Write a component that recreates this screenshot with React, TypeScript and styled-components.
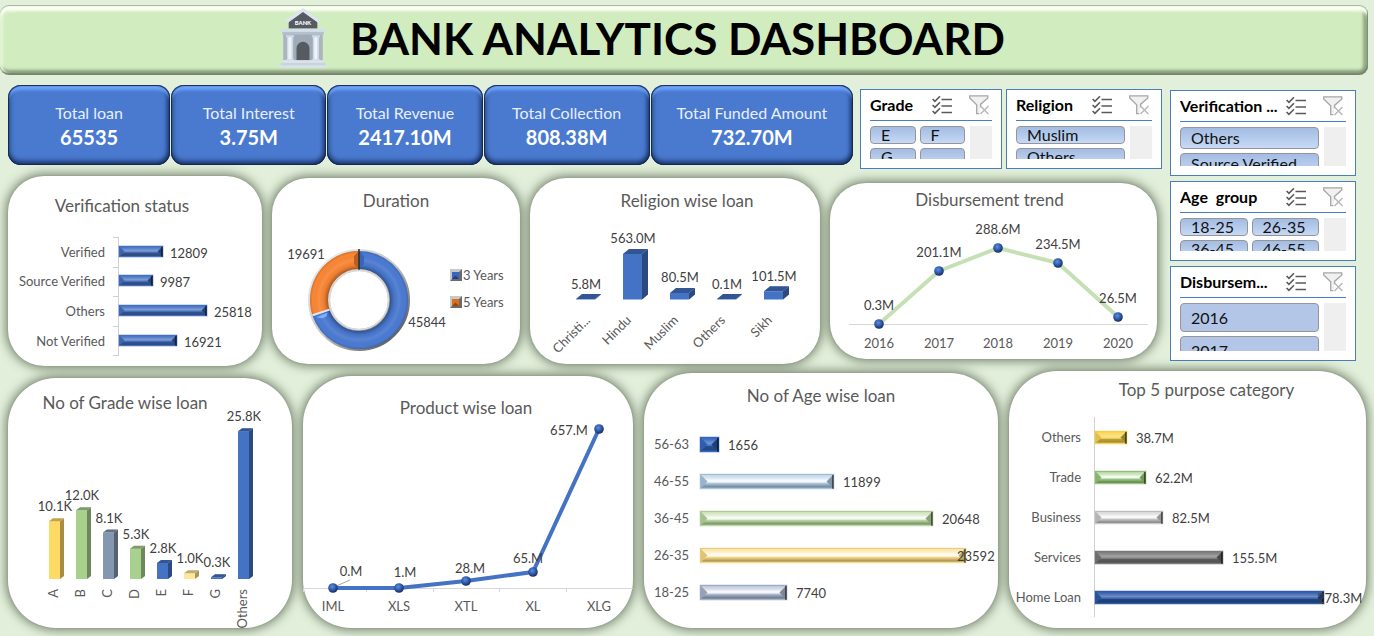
import React from "react";
import styled, { createGlobalStyle } from "styled-components";

const GlobalStyle = createGlobalStyle`
  * { box-sizing: border-box; }
  body {
    margin: 0;
    background: #e2efda;
    color: #595959;
    font-family: Lato, "Liberation Sans", sans-serif;
  }
  h1, h2, h3, p, dl, dd { margin: 0; }
`;

/* ---------- page frame ---------- */

const Page = styled.main`
  padding: 5px 0 8px;
  overflow: hidden;
`;

const Banner = styled.header`
  display: flex;
  align-items: center;
  justify-content: center;
  gap: 23px;
  height: 70px;
  margin-right: 6px;
  padding: 0 84px 4px 0;
  border-radius: 9px;
  background: #d1ecbf;
  box-shadow:
    inset 0 1px 1px #9fb592,
    inset -1px -2px 1px #76886c,
    inset 0 7px 3px -1px #fbfff4,
    inset 3px 0 3px #e6f8d9,
    inset -5px 0 3px #93a786,
    inset 0 -5px 3px #8b9f7f;
`;

const BannerTitle = styled.h1`
  color: #000;
  font-size: 44px;
  font-weight: 700;
  line-height: 60px;
  white-space: nowrap;
`;

const TopArea = styled.div`
  display: grid;
  grid-template-columns: minmax(0, 1fr) 186px;
  gap: 8px;
  padding: 10px 18px 0 8px;
`;

const MainColumn = styled.div`
  display: flex;
  flex-direction: column;
  gap: 7px;
`;

const SideColumn = styled.aside`
  display: flex;
  flex-direction: column;
  gap: 5px;
  padding-top: 5px;
`;

const SummaryRow = styled.div`
  display: grid;
  grid-template-columns: 848fr 142fr 156fr;
  column-gap: 4px;
  height: 84px;
`;

const KpiList = styled.dl`
  display: grid;
  grid-template-columns: 162fr 155fr 155fr 166fr 202fr;
  gap: 1px;
  height: 80px;
  padding-right: 3px;
`;

const Kpi = styled.div`
  display: flex;
  flex-direction: column;
  align-items: center;
  justify-content: center;
  padding-bottom: 1px;
  border-radius: 13px;
  background: #4a7ad0;
  color: #fff;
  text-align: center;
  white-space: nowrap;
  box-shadow:
    inset 0 0 1px 1px #14264a,
    inset 0 6px 3px -1px #6fa3fb,
    inset -4px 0 4px -1px #1f3a70,
    inset 0 -5px 5px -1px #1f3a70,
    inset 3px 0 4px #35609f;
`;

const KpiLabel = styled.dt`
  color: #e9effa;
  font-size: 16px;
  line-height: 24px;
`;

const KpiValue = styled.dd`
  font-size: 20px;
  font-weight: 700;
  line-height: 24px;
`;

/* ---------- slicers ---------- */

const SlicerBox = styled.section<{ $height: number }>`
  display: flex;
  flex-direction: column;
  align-self: end;
  width: 100%;
  height: ${(p) => p.$height}px;
  padding: 0 9px 9px;
  border: 1px solid #4a7ebb;
  background: #fff;
  color: #000;
`;

const SlicerHead = styled.div`
  display: flex;
  align-items: center;
  flex: none;
  gap: 17px;
  height: 31px;
  padding-right: 3px;
  border-bottom: 1px solid #4a7ebb;
`;

const SlicerName = styled.h3`
  flex: 1;
  min-width: 0;
  font-size: 16px;
  font-weight: 700;
  line-height: 20px;
  white-space: pre;
`;

const IconButton = styled.button`
  display: block;
  flex: none;
  width: 20px;
  height: 20px;
  padding: 0;
  border: 0;
  background: none;
  & svg { display: block; }
`;

const SlicerBody = styled.div`
  display: flex;
  flex: 1;
  gap: 5px;
  min-height: 0;
  margin-top: 5px;
  overflow: hidden;
`;

const SlicerGrid = styled.div<{ $columns: number; $row: number }>`
  display: grid;
  flex: 1;
  grid-template-columns: repeat(${(p) => p.$columns}, minmax(0, 1fr));
  grid-auto-rows: ${(p) => p.$row}px;
  gap: 4px;
`;

const SlicerItem = styled.button<{ $flat?: boolean }>`
  padding: 0 0 0 10px;
  border: 1px solid #969696;
  border-radius: 4px;
  background: ${(p) => (p.$flat ? "#b4c6e7" : "linear-gradient(#a3bce2, #c6d9f5)")};
  color: #111;
  font-family: inherit;
  font-size: 16px;
  line-height: 16px;
  text-align: left;
  white-space: nowrap;
`;

const ScrollTrack = styled.div`
  flex: none;
  width: 22px;
  background: #efefef;
`;

const MultiSelectIcon = () => (
  <svg width="20" height="20" viewBox="0 0 20 20" fill="none" stroke="#5a5a5a" strokeWidth="1.6">
    <path d="M.6 4l2.3 2.3L8 1.2M.6 10l2.3 2.3L8 7.2M.6 16l2.3 2.3L8 13.2" />
    <path d="M9.5 4.5H20M9.5 11H20M9.5 17.5H20" />
  </svg>
);

const ClearFilterIcon = () => (
  <svg width="20" height="20" viewBox="0 0 20 20" fill="none" stroke="#a6a6a6" strokeWidth="1.3">
    <path d="M11.5 12.2V9.4L18.8 3V.8H.7V3l7 6.8v8.9h2.6" fill="#f1f1f1" />
    <path d="M11.5 11l8 8M19.5 11l-8 8" stroke="#b9b9b9" strokeWidth="1.5" />
  </svg>
);

type SlicerProps = {
  name: string;
  label?: string;
  height: number;
  row: number;
  columns?: number;
  flat?: boolean;
  items: string[];
};

const Slicer = ({ name, label, height, row, columns = 1, flat, items }: SlicerProps) => (
  <SlicerBox $height={height} aria-label={label || name}>
    <SlicerHead>
      <SlicerName>{name}</SlicerName>
      <IconButton type="button" aria-label="Multi-select"><MultiSelectIcon /></IconButton>
      <IconButton type="button" aria-label="Clear filter"><ClearFilterIcon /></IconButton>
    </SlicerHead>
    <SlicerBody>
      <SlicerGrid $columns={columns} $row={row}>
        {items.map((item) => (
          <SlicerItem key={item} type="button" $flat={flat} aria-label={item || "(blank)"}>{item}</SlicerItem>
        ))}
      </SlicerGrid>
      <ScrollTrack />
    </SlicerBody>
  </SlicerBox>
);

/* ---------- chart cards ---------- */

const CardRow = styled.div`
  display: grid;
  grid-template-columns: 254fr 248fr 290fr 327fr;
  align-items: center;
  gap: 10px;
  padding-right: 5px;
`;

const BottomRow = styled.div`
  display: grid;
  grid-template-columns: 284fr 330fr 354fr 357fr;
  align-items: end;
  gap: 11px;
  padding: 5px 8px 0;
`;

const Card = styled.article<{ $radius: number }>`
  border-radius: ${(p) => p.$radius}px;
  background: #fff;
  box-shadow: 0 0 2px #8b9683, 0 0 10px 3px rgba(75, 88, 66, 0.62);
`;

const CardTitle = styled.h2<{ $top: number; $left?: number; $right?: number }>`
  padding: ${(p) => p.$top}px ${(p) => p.$right || 0}px 0 ${(p) => p.$left || 0}px;
  font-size: 17px;
  font-weight: 400;
  line-height: 24px;
  text-align: center;
  white-space: nowrap;
`;

const Plot = styled.svg`
  display: block;
  width: 100%;
  height: auto;
  overflow: visible;
  font-size: 13px;
`;

const Category = styled.text`
  fill: #595959;
`;

const Value = styled.text`
  fill: #404040;
`;

type ChartProps = {
  title: string;
  width: number;
  height: number;
  top: number;
  left?: number;
  right?: number;
  radius?: number;
  children: React.ReactNode;
};

/* The plot keeps the card's own coordinates; the title takes the band above it. */
const Chart = ({ title, width, height, top, left, right, radius = 36, children }: ChartProps) => {
  const band = top + 24;
  return (
    <Card $radius={radius}>
      <CardTitle $top={top} $left={left} $right={right}>{title}</CardTitle>
      <Plot viewBox={`0 ${band} ${width} ${height - band}`} role="img" aria-label={title}>{children}</Plot>
    </Card>
  );
};

const SharedDefs = styled.svg`
  position: absolute;
  width: 0;
  height: 0;
`;

const Gradients = () => (
  <SharedDefs aria-hidden="true">
    <defs>
      <linearGradient id="bevelSoft" x1="0" y1="0" x2="0" y2="1">
        <stop offset="0" stopColor="#000" stopOpacity=".08" />
        <stop offset=".15" stopColor="#fff" stopOpacity=".05" />
        <stop offset=".42" stopColor="#fff" stopOpacity=".3" />
        <stop offset=".54" stopColor="#fff" stopOpacity=".12" />
        <stop offset=".62" stopColor="#000" stopOpacity=".26" />
        <stop offset=".86" stopColor="#000" stopOpacity=".34" />
        <stop offset=".95" stopColor="#000" stopOpacity="0" />
      </linearGradient>
      <linearGradient id="bevelBright" x1="0" y1="0" x2="0" y2="1">
        <stop offset="0" stopColor="#000" stopOpacity=".05" />
        <stop offset=".1" stopColor="#fff" stopOpacity=".3" />
        <stop offset=".3" stopColor="#fff" stopOpacity=".6" />
        <stop offset=".42" stopColor="#fff" stopOpacity=".9" />
        <stop offset=".54" stopColor="#fff" stopOpacity=".85" />
        <stop offset=".6" stopColor="#fff" stopOpacity=".2" />
        <stop offset=".72" stopColor="#000" stopOpacity=".12" />
        <stop offset=".87" stopColor="#000" stopOpacity=".34" />
        <stop offset=".95" stopColor="#000" stopOpacity="0" />
      </linearGradient>
      <radialGradient id="bead" cx=".42" cy=".36" r=".62">
        <stop offset="0" stopColor="#5c8ee6" />
        <stop offset=".45" stopColor="#3765b8" />
        <stop offset="1" stopColor="#182f60" />
      </radialGradient>
      <radialGradient id="ringShade" gradientUnits="userSpaceOnUse" cx="87" cy="122" r="50">
        <stop offset=".6" stopColor="#000" stopOpacity=".4" />
        <stop offset=".7" stopColor="#000" stopOpacity=".06" />
        <stop offset=".8" stopColor="#fff" stopOpacity=".08" />
        <stop offset=".93" stopColor="#000" stopOpacity="0" />
        <stop offset="1" stopColor="#000" stopOpacity=".22" />
      </radialGradient>
      <linearGradient id="metal" x1="0" y1="0" x2="1" y2="1">
        <stop offset="0" stopColor="#ededed" />
        <stop offset=".5" stopColor="#c4c4c4" />
        <stop offset="1" stopColor="#5a5a5a" />
      </linearGradient>
    </defs>
  </SharedDefs>
);

type BarProps = { x: number; cy: number; w: number; h: number; color: string; bright?: boolean };

const BevelBar = ({ x, cy, w, h, color, bright }: BarProps) => {
  const y = cy - h / 2;
  const d = h / 2;
  return (
    <g>
      <rect x={x} y={y} width={w} height={h} fill={color} />
      <rect x={x} y={y} width={w} height={h} fill={bright ? "url(#bevelBright)" : "url(#bevelSoft)"} />
      <path d={`M${x} ${y}l${d} ${d}l${-d} ${d}z`} fill={color} />
      <path d={`M${x} ${y}l${d} ${d}l${-d} ${d}z`} fill="#000" opacity=".1" />
      <path d={`M${x + w} ${y}l${-d} ${d}l${d} ${d}z`} fill={color} />
      <path d={`M${x + w} ${y}l${-d} ${d}l${d} ${d}z`} fill="#000" opacity={bright ? ".25" : ".4"} />
      <rect x={x + w - 2} y={y + 1} width="2" height={h - 1} fill="#000" opacity=".5" />
      <rect x={x} y={y} width={w} height={h} fill="none" stroke={color} strokeWidth="1" opacity=".5" />
    </g>
  );
};

type BlockProps = { x: number; base: number; w: number; h: number; dx: number; dy: number; color: string };

const Block = ({ x, base, w, h, dx, dy, color }: BlockProps) => (
  <g>
    <rect x={x} y={base - h} width={w} height={h} fill={color} />
    <path d={`M${x + w} ${base}v${-h}l${dx} ${-dy}v${h}z`} fill={color} />
    <path d={`M${x + w} ${base}v${-h}l${dx} ${-dy}v${h}z`} fill="#000" opacity=".35" />
    <path d={`M${x} ${base - h}l${dx} ${-dy}h${w}l${-dx} ${dy}z`} fill={color} />
    <path d={`M${x} ${base - h}l${dx} ${-dy}h${w}l${-dx} ${dy}z`} fill="#000" opacity=".25" />
  </g>
);

/* ---------- charts ---------- */

const BLUE = "#4472c4";

const VerificationChart = () => {
  const rows = [
    { name: "Verified", value: 12809, y: 76 },
    { name: "Source Verified", value: 9987, y: 105 },
    { name: "Others", value: 25818, y: 135 },
    { name: "Not Verified", value: 16921, y: 165 },
  ];
  return (
    <Chart title="Verification status" width={254} height={190} top={18} right={26}>
      <path d="M110.5 61V180M105 61.5h5M105 91.5h5M105 120.5h5M105 150.5h5M105 179.5h5" stroke="#d0d0d0" fill="none" />
      {rows.map((r) => {
        const w = Math.round((r.value * 88) / 25818);
        return (
          <g key={r.name}>
            <Category x="97" y={r.y + 5} textAnchor="end">{r.name}</Category>
            <BevelBar x={111} cy={r.y - 0.5} w={w} h={11} color={BLUE} />
            <Value x={111 + w + 7} y={r.y + 6}>{r.value}</Value>
          </g>
        );
      })}
    </Chart>
  );
};

const polar = (r: number, deg: number) => {
  const a = ((deg - 90) * Math.PI) / 180;
  return `${(87 + r * Math.cos(a)).toFixed(2)} ${(122 + r * Math.sin(a)).toFixed(2)}`;
};

const ringSlice = (from: number, to: number, inner: number, outer: number) => {
  const big = to - from > 180 ? 1 : 0;
  return `M${polar(outer, from)}A${outer} ${outer} 0 ${big} 1 ${polar(outer, to)}L${polar(inner, to)}A${inner} ${inner} 0 ${big} 0 ${polar(inner, from)}Z`;
};

const DurationChart = () => {
  const split = (45844 / (45844 + 19691)) * 360;
  return (
    <Chart title="Duration" width={248} height={186} top={11}>
      <circle cx="87" cy="122" r="40" fill="none" stroke="url(#metal)" strokeWidth="22" />
      <path d={ringSlice(0, split, 31, 49)} fill="#4a7ad2" />
      <path d={ringSlice(split, 360, 31, 49)} fill="#fa8634" />
      <circle cx="87" cy="122" r="40" fill="none" stroke="url(#ringShade)" strokeWidth="18" />
      <path d={`M${polar(31, split)}L${polar(49, split)}`} stroke="#e6e6e6" strokeWidth="2" />
      <path d={`M${polar(34, split - 4)}Q${polar(38, split - 14)} ${polar(46, split - 4)}Z`} fill="#7fb0ff" />
      <path d="M87 73v18l5-5v-8z" fill="#3765b8" />
      <path d="M87 73v18l-5-5v-8z" fill="#b9601f" />
      <path d="M87 71v21" stroke="#2b2b2b" strokeWidth="1.5" />
      <circle cx="87" cy="122" r="29.5" fill="none" stroke="#d9d9d9" strokeWidth="1.5" />
      <Value x="34" y="81" textAnchor="middle">19691</Value>
      <Value x="155" y="149" textAnchor="middle">45844</Value>
      {[
        { name: "3 Years", y: 97, color: "#3765c0" },
        { name: "5 Years", y: 124, color: "#e06d1c" },
      ].map((k) => (
        <g key={k.name}>
          <rect x="178" y={k.y - 6} width="12" height="12" fill="#c8c8c8" />
          <path d={`M190 ${k.y - 6}v12h-12l3 -3h6v-6z`} fill="#6b6b6b" />
          <rect x="180" y={k.y - 3} width="7" height="7" fill={k.color} />
          <path d={`M180 ${k.y + 4}l3.5 -3.5l3.5 3.5z`} fill="#000" opacity=".35" />
          <Category x="191" y={k.y + 5}>{k.name}</Category>
        </g>
      ))}
    </Chart>
  );
};

const ReligionChart = () => {
  const bars = [
    { name: "Christi...", label: "5.8M", value: 5.8, end: 61 },
    { name: "Hindu", label: "563.0M", value: 563, end: 102 },
    { name: "Muslim", label: "80.5M", value: 80.5, end: 149 },
    { name: "Others", label: "0.1M", value: 0.1, end: 196 },
    { name: "Sikh", label: "101.5M", value: 101.5, end: 243 },
  ];
  return (
    <Chart title="Religion wise loan" width={290} height={186} top={11} left={24}>
      {bars.map((b, i) => {
        const x = 46 + i * 47;
        const h = Math.max(0.5, b.value * 0.081);
        return (
          <g key={b.name}>
            <Block x={x} base={121.5} w={19} h={h} dx={6} dy={5} color={BLUE} />
            <Value x={x + 10} y={111 - h} textAnchor="middle">{b.label}</Value>
            <Category transform={`translate(${b.end} 143) rotate(-45)`} textAnchor="end">{b.name}</Category>
          </g>
        );
      })}
    </Chart>
  );
};

const DisbursementChart = () => {
  const points = [
    { name: "2016", label: "0.3M", x: 49, y: 141 },
    { name: "2017", label: "201.1M", x: 109, y: 88 },
    { name: "2018", label: "288.6M", x: 168, y: 65 },
    { name: "2019", label: "234.5M", x: 228, y: 80 },
    { name: "2020", label: "26.5M", x: 288, y: 134 },
  ];
  return (
    <Chart title="Disbursement trend" width={327} height={176} top={5} right={8}>
      <path d="M19 141.5H318" stroke="#d6d6d6" />
      <polyline points={points.map((p) => `${p.x},${p.y}`).join(" ")} fill="none" stroke="#c5e0b4" strokeWidth="4" strokeLinejoin="round" />
      {points.map((p) => (
        <g key={p.name}>
          <circle cx={p.x} cy={p.y} r="4.8" fill="url(#bead)" />
          <Value x={p.x} y={p.y - 14} textAnchor="middle">{p.label}</Value>
          <Category x={p.x} y="165" textAnchor="middle">{p.name}</Category>
        </g>
      ))}
    </Chart>
  );
};

const GradeChart = () => {
  const bars = [
    { name: "A", value: 10.1, color: "#ffd966" },
    { name: "B", value: 12, color: "#a9d18e" },
    { name: "C", value: 8.1, color: "#8497b0" },
    { name: "D", value: 5.3, color: "#a9d18e" },
    { name: "E", value: 2.8, color: BLUE },
    { name: "F", value: 1, color: "#ffe699" },
    { name: "G", value: 0.3, color: BLUE },
    { name: "Others", value: 25.8, color: BLUE },
  ];
  return (
    <Chart title="No of Grade wise loan" width={284} height={250} top={13} right={50} radius={48}>
      {bars.map((b, i) => {
        const x = 41 + i * 27;
        const h = b.value * 5.73;
        return (
          <g key={b.name}>
            <Block x={x} base={201} w={11} h={h} dx={4} dy={3} color={b.color} />
            <Value x={x + 6} y={191 - h} textAnchor="middle">{b.value.toFixed(1)}K</Value>
            <Category transform={`translate(${x + 9} 211) rotate(-90)`} textAnchor="end">{b.name}</Category>
          </g>
        );
      })}
    </Chart>
  );
};

const ProductChart = () => {
  const points = [
    { name: "IML", label: "0.M", x: 30, y: 212, lx: 48, ly: 200 },
    { name: "XLS", label: "1.M", x: 96, y: 212, lx: 102, ly: 201 },
    { name: "XTL", label: "28.M", x: 163, y: 205, lx: 167, ly: 197 },
    { name: "XL", label: "65.M", x: 230, y: 196, lx: 225, ly: 187 },
    { name: "XLG", label: "657.M", x: 296, y: 53, lx: 266, ly: 59 },
  ];
  return (
    <Chart title="Product wise loan" width={330} height={252} top={20} right={4} radius={48}>
      <path d="M0 212.5H330M.5 212v4M63.5 212v4M130.5 212v4M196.5 212v4M263.5 212v4" stroke="#d6d6d6" fill="none" />
      <polyline points={points.map((p) => `${p.x},${p.y}`).join(" ")} fill="none" stroke={BLUE} strokeWidth="4" strokeLinejoin="round" />
      <path d="M47 204L31 211" stroke="#a6a6a6" />
      {points.map((p) => (
        <g key={p.name}>
          <circle cx={p.x} cy={p.y} r="4.8" fill="url(#bead)" />
          <Value x={p.lx} y={p.ly} textAnchor="middle">{p.label}</Value>
          <Category x={p.x} y="235" textAnchor="middle">{p.name}</Category>
        </g>
      ))}
    </Chart>
  );
};

const AgeChart = () => {
  const rows = [
    { name: "56-63", value: 1656, color: "#3568c4", y: 71 },
    { name: "46-55", value: 11899, color: "#abc8e2", bright: true, y: 108 },
    { name: "36-45", value: 20648, color: "#b8d8a0", bright: true, y: 145 },
    { name: "26-35", value: 23592, color: "#fadb84", bright: true, y: 182 },
    { name: "18-25", value: 7740, color: "#a6b4ce", bright: true, y: 219 },
  ];
  return (
    <Chart title="No of Age wise loan" width={354} height={255} top={11} radius={48}>
      {rows.map((r) => {
        const w = Math.round(r.value * 0.01128);
        return (
          <g key={r.name}>
            <Category x="10" y={r.y + 5}>{r.name}</Category>
            <BevelBar x={56} cy={r.y + 0.5} w={w} h={15} color={r.color} bright={r.bright} />
            <Value x={Math.min(56 + w + 9, 313)} y={r.y + 6}>{r.value}</Value>
          </g>
        );
      })}
    </Chart>
  );
};

const PurposeChart = () => {
  const rows = [
    { name: "Others", value: 38.7, w: 32, color: "#fbd652", bright: false, y: 66 },
    { name: "Trade", value: 62.2, w: 51, color: "#98c97c", bright: true, y: 106 },
    { name: "Business", value: 82.5, w: 68, color: "#c9c9c9", bright: true, y: 146 },
    { name: "Services", value: 155.5, w: 128, color: "#7b7b7b", bright: false, y: 186 },
    { name: "Home Loan", value: 278.3, w: 229, color: "#2f5cab", bright: false, y: 226 },
  ];
  return (
    <Chart title="Top 5 purpose category" width={357} height={257} top={7} left={38} radius={48}>
      <path d="M85.5 46V246" stroke="#d0d0d0" />
      {rows.map((r) => (
        <g key={r.name}>
          <Category x="72" y={r.y + 5} textAnchor="end">{r.name}</Category>
          <BevelBar x={86} cy={r.y + 0.5} w={r.w} h={13} color={r.color} bright={r.bright} />
          <Value x={Math.min(86 + r.w + 9, 308)} y={r.y + 6}>{r.value.toFixed(1)}M</Value>
        </g>
      ))}
    </Chart>
  );
};

const BankLogo = () => (
  <svg width="48" height="60" viewBox="0 0 140 176" role="img" aria-label="Bank">
    <path d="M70 8l42 30v22H28V38z" fill="#565b62" />
    <path d="M70 0l51 36-7 7-44-31-44 31-7-7z" fill="#dde5f0" />
    <text x="70" y="51" fontSize="17" fontWeight="900" textAnchor="middle" fill="#fff">BANK</text>
    <rect x="12" y="76" width="116" height="78" fill="#a9b5bf" />
    <rect x="42" y="76" width="56" height="78" fill="#9fabb6" />
    <rect x="5" y="61" width="131" height="9" fill="#d5deea" />
    <rect x="9" y="70" width="122" height="8" fill="#b4c0cf" />
    <path d="M20 80h24v6h-3v64h3v4H20v-4h3V86h-3zM96 80h24v6h-3v64h3v4H96v-4h3V86h-3z" fill="#cfd9e5" />
    <path d="M27 86h9v64h-9zM103 86h9v64h-9z" fill="#eef3f9" />
    <path d="M51 154v-36a19 19 0 0 1 38 0v36z" fill="#565b62" />
    <rect x="10" y="153" width="120" height="8" fill="#dbe3ee" />
    <rect x="5" y="161" width="130" height="7" fill="#c9d2df" />
    <rect x="0" y="168" width="140" height="8" fill="#d7e0eb" />
  </svg>
);

const kpis = [
  ["Total loan", "65535"],
  ["Total Interest", "3.75M"],
  ["Total Revenue", "2417.10M"],
  ["Total Collection", "808.38M"],
  ["Total Funded Amount", "732.70M"],
];

export default function App() {
  return (
    <Page>
      <GlobalStyle />
      <Gradients />
      <Banner>
        <BankLogo />
        <BannerTitle>BANK ANALYTICS DASHBOARD</BannerTitle>
      </Banner>
      <TopArea>
        <MainColumn>
          <SummaryRow>
            <KpiList>
              {kpis.map(([label, value]) => (
                <Kpi key={label}>
                  <KpiLabel>{label}</KpiLabel>
                  <KpiValue>{value}</KpiValue>
                </Kpi>
              ))}
            </KpiList>
            <Slicer name="Grade" height={80} row={18} columns={2} items={["E", "F", "G", ""]} />
            <Slicer name="Religion" height={80} row={18} items={["Muslim", "Others"]} />
          </SummaryRow>
          <CardRow>
            <VerificationChart />
            <DurationChart />
            <ReligionChart />
            <DisbursementChart />
          </CardRow>
        </MainColumn>
        <SideColumn>
          <Slicer name="Verification ..." label="Verification status" height={86} row={22} items={["Others", "Source Verified"]} />
          <Slicer name="Age  group" height={80} row={18} columns={2} items={["18-25", "26-35", "36-45", "46-55"]} />
          <Slicer name="Disbursem..." label="Disbursement year" height={95} row={29} flat items={["2016", "2017"]} />
        </SideColumn>
      </TopArea>
      <BottomRow>
        <GradeChart />
        <ProductChart />
        <AgeChart />
        <PurposeChart />
      </BottomRow>
    </Page>
  );
}
